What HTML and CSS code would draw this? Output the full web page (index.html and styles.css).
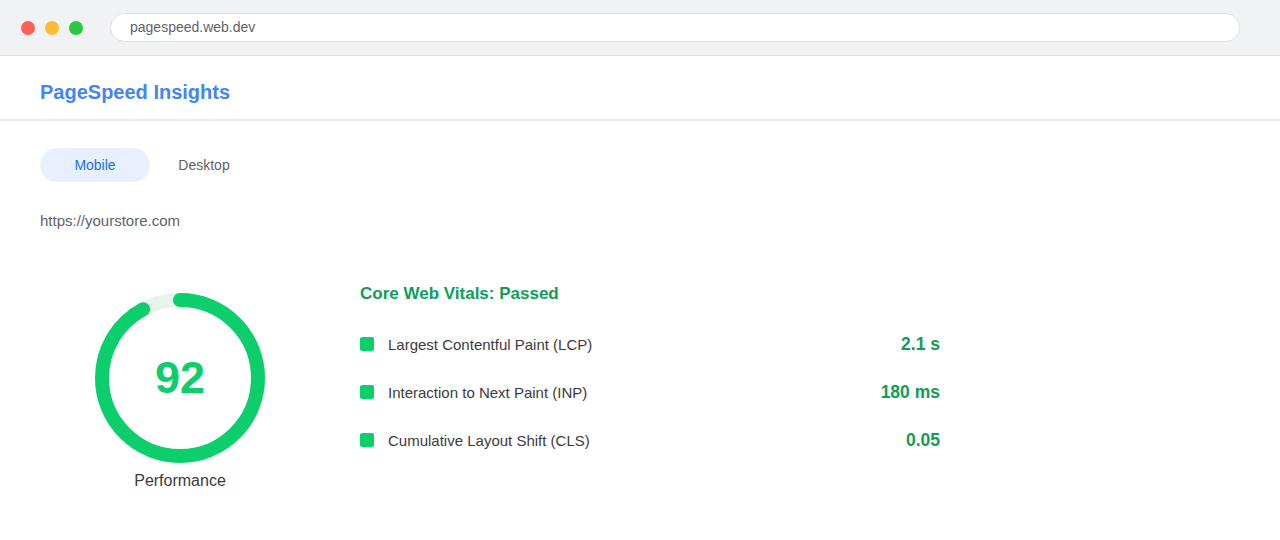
FILE: index.html
```html
<!DOCTYPE html>
<html lang="en">
<head>
<meta charset="utf-8">
<title>PageSpeed Insights</title>
<link rel="stylesheet" href="styles.css">
</head>
<body>
<div class="browser-bar">
  <div class="lights">
    <span class="light red"></span>
    <span class="light yellow"></span>
    <span class="light green"></span>
  </div>
  <div class="address">pagespeed.web.dev</div>
</div>
<header class="site-header">
  <h1 class="brand">PageSpeed Insights</h1>
</header>
<main class="content">
  <nav class="tabs">
    <span class="tab active">Mobile</span>
    <span class="tab">Desktop</span>
  </nav>
  <div class="tested-url">https://yourstore.com</div>
  <section class="report">
    <div class="gauge-col">
      <div class="gauge">
        <svg width="170" height="170" viewBox="0 0 170 170">
          <circle class="track" cx="85" cy="85" r="78"/>
          <circle class="arc" cx="85" cy="85" r="78" stroke-dasharray="450.9 490.1" transform="rotate(-90 85 85)"/>
        </svg>
        <div class="score">92</div>
      </div>
      <div class="gauge-label">Performance</div>
    </div>
    <div class="vitals">
      <h2 class="vitals-title">Core Web Vitals: Passed</h2>
      <ul class="metrics">
        <li class="metric"><span class="dot"></span><span class="metric-name">Largest Contentful Paint (LCP)</span><span class="metric-value">2.1 s</span></li>
        <li class="metric"><span class="dot"></span><span class="metric-name">Interaction to Next Paint (INP)</span><span class="metric-value">180 ms</span></li>
        <li class="metric"><span class="dot"></span><span class="metric-name">Cumulative Layout Shift (CLS)</span><span class="metric-value">0.05</span></li>
      </ul>
    </div>
  </section>
</main>
</body>
</html>
```
FILE: styles.css
```css
* { box-sizing: border-box; }
html, body { margin: 0; padding: 0; }
body {
  font-family: "Liberation Sans", Arial, sans-serif;
  background: #ffffff;
  color: #3c3c3c;
  width: 1280px;
  height: 540px;
  overflow: hidden;
}
.browser-bar {
  height: 56px;
  background: #f1f2f4;
  border-bottom: 1px solid #e1e2e4;
  display: flex;
  align-items: center;
  padding: 0 40px 0 21px;
}
.lights { display: flex; gap: 10px; }
.light {
  width: 14px;
  height: 14px;
  border-radius: 50%;
  display: block;
}
.light.red { background: #ff5f57; }
.light.yellow { background: #febc2e; }
.light.green { background: #28c840; }
.address {
  margin-left: 27px;
  flex: 1;
  height: 29px;
  background: #ffffff;
  border: 1px solid #e0e1e3;
  border-radius: 15px;
  padding-left: 19px;
  font-size: 14px;
  line-height: 27px;
  color: #5f6368;
}
.site-header {
  padding: 24px 40px 15px;
  border-bottom: 2px solid #ebebeb;
}
.brand {
  margin: 0;
  font-size: 20px;
  line-height: 24px;
  font-weight: 700;
  color: #4285f4;
}
.content { padding: 27px 40px 0; }
.tabs { display: flex; }
.tab {
  width: 110px;
  height: 34px;
  border-radius: 17px;
  display: flex;
  align-items: center;
  justify-content: center;
  font-size: 14px;
  color: #5f6368;
}
.tab + .tab { width: 108px; }
.tab.active {
  background: #e8f0fe;
  color: #1a73e8;
}
.tested-url {
  margin-top: 29px;
  font-size: 15px;
  line-height: 20px;
  color: #5f6368;
}
.report {
  display: flex;
  gap: 40px;
  margin-top: 53px;
  align-items: flex-start;
}
.gauge-col {
  width: 280px;
  padding-top: 9px;
  display: flex;
  flex-direction: column;
  align-items: center;
}
.gauge {
  position: relative;
  width: 170px;
  height: 170px;
}
.gauge svg { display: block; }
.track { fill: none; stroke: #e6f4ea; stroke-width: 14; }
.arc { fill: none; stroke: #0cce6b; stroke-width: 14; stroke-linecap: round; }
.score {
  position: absolute;
  inset: 0;
  display: flex;
  align-items: center;
  justify-content: center;
  font-size: 45px;
  font-weight: 700;
  color: #0cce6b;
}
.gauge-label {
  margin-top: 8px;
  font-size: 16px;
  line-height: 20px;
  color: #3c3c3c;
}
.vitals { width: 580px; }
.vitals-title {
  margin: 0;
  font-size: 17px;
  line-height: 20px;
  font-weight: 700;
  color: #0f9d58;
}
.metrics {
  list-style: none;
  margin: 16px 0 0;
  padding: 0;
}
.metric {
  height: 48px;
  display: flex;
  align-items: center;
}
.dot {
  width: 14px;
  height: 14px;
  border-radius: 2px;
  background: #0cce6b;
  margin-right: 14px;
}
.metric-name {
  flex: 1;
  font-size: 15px;
  color: #3c3c3c;
}
.metric-value {
  font-size: 17.5px;
  font-weight: 700;
  color: #0f9d58;
}
```
